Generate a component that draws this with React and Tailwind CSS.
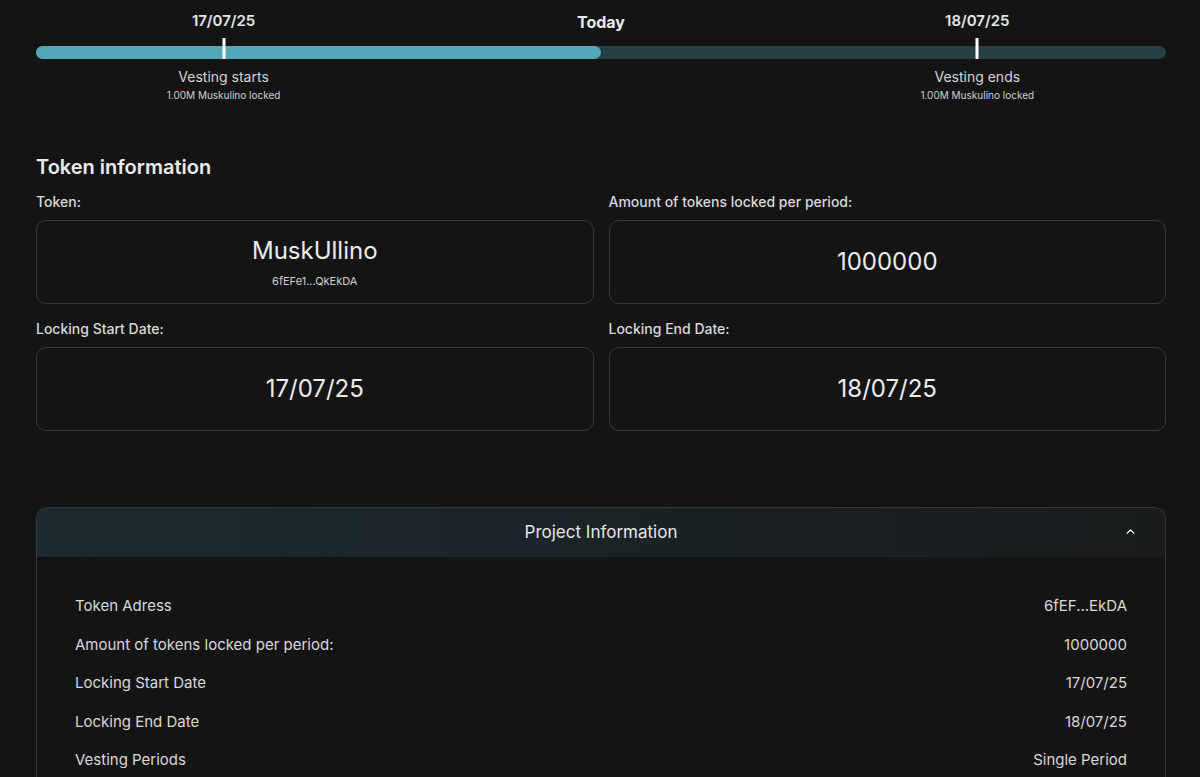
import { ChevronUp } from 'lucide-react';

const rows = [
    { label: 'Token Adress', value: '6fEF...EkDA' },
    { label: 'Amount of tokens locked per period:', value: '1000000' },
    { label: 'Locking Start Date', value: '17/07/25' },
    { label: 'Locking End Date', value: '18/07/25' },
    { label: 'Vesting Periods', value: 'Single Period' },
];

const Field = ({ label, children }) => (
    <div className="flex flex-col">
        <p className="text-[14px] font-medium text-[#d9d9d9] h-[19px] leading-[19px]">{label}</p>
        <div className="mt-[9px] h-[84px] rounded-[10px] border border-[#2d3c42] flex flex-col items-center justify-center">
            {children}
        </div>
    </div>
);

const App = () => {
    return (
        <div
            className="min-h-[777px] bg-[#141414] text-white overflow-hidden"
            style={{ fontFamily: 'Inter, "Noto Sans", sans-serif' }}
        >
            <div className="ml-[36px] w-[1130px]">
                {/* Timeline */}
                <div className="relative h-[38px]">
                    <span className="absolute left-[16.6%] top-[11px] -translate-x-1/2 text-[15px] font-semibold text-[#e6e6e6] leading-5">17/07/25</span>
                    <span className="absolute left-1/2 top-[12px] -translate-x-1/2 text-[16px] font-bold text-[#ececec] leading-5">Today</span>
                    <span className="absolute left-[83.3%] top-[11px] -translate-x-1/2 text-[15px] font-semibold text-[#e6e6e6] leading-5">18/07/25</span>
                </div>
                <div className="relative h-[21px]">
                    <div className="absolute left-0 right-0 bottom-0 h-[13px] rounded-full bg-[#263f46]">
                        <div className="h-full w-1/2 rounded-full bg-[#56a6b9]"></div>
                    </div>
                    <div className="absolute left-[16.6%] top-0 h-[21px] w-[3px] -translate-x-1/2 bg-white"></div>
                    <div className="absolute left-[83.3%] top-0 h-[21px] w-[3px] -translate-x-1/2 bg-white"></div>
                </div>
                <div className="relative h-[50px]">
                    <div className="absolute left-[16.6%] top-[8px] -translate-x-1/2 flex flex-col items-center whitespace-nowrap">
                        <span className="text-[14px] text-[#d4d4d4] leading-5">Vesting starts</span>
                        <span className="text-[10px] text-[#cfcfcf] leading-[14px] mt-[1px]">1.00M Muskulino locked</span>
                    </div>
                    <div className="absolute left-[83.3%] top-[8px] -translate-x-1/2 flex flex-col items-center whitespace-nowrap">
                        <span className="text-[14px] text-[#d4d4d4] leading-5">Vesting ends</span>
                        <span className="text-[10px] text-[#cfcfcf] leading-[14px] mt-[1px]">1.00M Muskulino locked</span>
                    </div>
                </div>

                {/* Token information */}
                <h2 className="mt-[44px] text-[20px] font-semibold text-[#ececec] leading-7">Token information</h2>
                <div className="mt-[11px] grid grid-cols-2 gap-x-[15px] gap-y-[15px]">
                    <Field label="Token:">
                        <span className="text-[24px] text-[#ececec] leading-8">MuskUllino</span>
                        <span className="text-[11px] text-[#cfcfcf] leading-4 mt-[6px]">6fEFe1...QkEkDA</span>
                    </Field>
                    <Field label="Amount of tokens locked per period:">
                        <span className="text-[24px] text-[#ececec] leading-8">1000000</span>
                    </Field>
                    <Field label="Locking Start Date:">
                        <span className="text-[24px] text-[#ececec] leading-8">17/07/25</span>
                    </Field>
                    <Field label="Locking End Date:">
                        <span className="text-[24px] text-[#ececec] leading-8">18/07/25</span>
                    </Field>
                </div>

                {/* Project information accordion */}
                <div className="mt-[76px] rounded-t-[12px] border border-b-0 border-[#2a3a40] overflow-hidden">
                    <div className="relative h-[49px] flex items-center justify-center bg-gradient-to-r from-[#1c2b31] via-[#1b2327] to-[#1a1c1d]">
                        <span className="text-[17px] text-[#e6e6e6]">Project Information</span>
                        <ChevronUp className="absolute right-[28px] top-[17px] w-[13px] h-[13px] text-white" strokeWidth={2.5} />
                    </div>
                    <div className="px-[38px] pt-[30px] pb-4">
                        {rows.map((r) => (
                            <div key={r.label} className="h-[38.5px] flex items-center justify-between text-[15px] text-[#d9d9d9]">
                                <span>{r.label}</span>
                                <span>{r.value}</span>
                            </div>
                        ))}
                    </div>
                </div>
            </div>
        </div>
    );
};

export default App;
